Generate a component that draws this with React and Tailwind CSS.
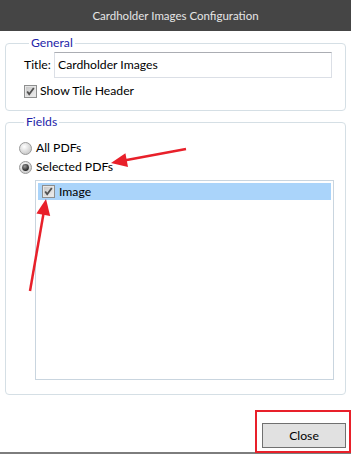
import React from "react";

function CheckBox() {
  return (
    <svg width="13" height="13" viewBox="0 0 13 13" className="shrink-0">
      <defs>
        <linearGradient id="cbg" x1="0" y1="0" x2="1" y2="1">
          <stop offset="0" stopColor="#c8c8c8" />
          <stop offset="1" stopColor="#ececec" />
        </linearGradient>
      </defs>
      <rect x="0.5" y="0.5" width="12" height="12" fill="#e6e6e6" stroke="#8e8f8f" />
      <rect x="2" y="2" width="9" height="9" fill="url(#cbg)" />
      <path d="M3.2 6.4 L5.2 9.2 L9.8 3" fill="none" stroke="#505050" strokeWidth="1.8" />
    </svg>
  );
}

function Radio({ checked }) {
  return (
    <svg width="13" height="13" viewBox="0 0 13 13" className="shrink-0">
      <defs>
        <radialGradient id="rg" cx="0.4" cy="0.35" r="0.7">
          <stop offset="0" stopColor="#ffffff" />
          <stop offset="1" stopColor="#c4c4c4" />
        </radialGradient>
        <radialGradient id="rd" cx="0.4" cy="0.35" r="0.7">
          <stop offset="0" stopColor="#9a9a9a" />
          <stop offset="1" stopColor="#151515" />
        </radialGradient>
      </defs>
      <circle cx="6.5" cy="6.5" r="6" fill="url(#rg)" stroke="#9a9a9a" />
      {checked && <circle cx="6.5" cy="6.5" r="3.4" fill="url(#rd)" />}
    </svg>
  );
}

export default function App() {
  return (
    <div
      className="relative w-[351px] h-[454px] bg-white overflow-hidden flex flex-col text-[12.2px] text-black"
      style={{ fontFamily: 'Lato, "Open Sans", sans-serif' }}
    >
      <div className="h-[31px] bg-[#454545] flex items-center justify-center text-[#e6e6e6] text-[11.5px] shrink-0">
        Cardholder Images Configuration
      </div>

      <div className="px-[5px] flex flex-col">
        <fieldset className="mt-[4px] border border-[#d5dfe5] rounded-[4px] pl-[18px] pr-[13px] pb-[11px]">
          <legend className="ml-[5px] px-[2px] text-[#2323a8] leading-[16px]">General</legend>
          <div className="flex items-center mt-[1px]">
            <span className="w-[30px] leading-[16px]">Title:</span>
            <div className="flex-1 h-[26px] border border-[#dbdfe6] border-t-[#abadb3] flex items-center pl-[3px] leading-[16px]">
              Cardholder Images
            </div>
          </div>
          <div className="flex items-center gap-[3px] mt-[5px] h-[16px]">
            <CheckBox />
            <span className="leading-[16px]">Show Tile Header</span>
          </div>
        </fieldset>

        <fieldset className="mt-[3px] border border-[#d5dfe5] rounded-[4px] pl-[13px] pr-[11px] pb-[14px]">
          <legend className="ml-[5px] px-[2px] text-[#2323a8] leading-[16px]">Fields</legend>
          <div className="flex items-center gap-[4px] mt-[9px] h-[18px]">
            <Radio />
            <span className="leading-[16px]">All PDFs</span>
          </div>
          <div className="flex items-center gap-[4px] mt-[1px] h-[18px]">
            <Radio checked />
            <span className="leading-[16px]">Selected PDFs</span>
          </div>
          <div className="mt-[4px] ml-[16px] h-[200px] border border-[#c9d5df] p-[2px]">
            <div className="h-[17px] bg-[#aad4fa] flex items-center gap-[4px] pl-[4px]">
              <CheckBox />
              <span className="leading-[16px]">Image</span>
            </div>
          </div>
        </fieldset>

        <div className="flex justify-end mt-[28px]">
          <div className="w-[84px] h-[25px] bg-[#e1e1e1] border border-[#707070] flex items-center justify-center leading-[16px]">
            Close
          </div>
        </div>
      </div>

      <div className="absolute left-0 right-0 bottom-0 h-[2px] bg-[#7d7d7d]" />
      <div className="absolute left-[255px] top-[410px] w-[96px] h-[43px] border-2 border-[#e8202a]" />

      <svg className="absolute inset-0 pointer-events-none" width="351" height="454">
        <line x1="186" y1="149" x2="124" y2="160.5" stroke="#e8202a" strokeWidth="2.5" />
        <polygon points="111,163 125.4,153.2 128,167" fill="#e8202a" />
        <line x1="30" y1="291" x2="43.6" y2="213" stroke="#e8202a" strokeWidth="2.5" />
        <polygon points="46,199 36.4,213.6 50.2,216" fill="#e8202a" />
      </svg>
    </div>
  );
}
